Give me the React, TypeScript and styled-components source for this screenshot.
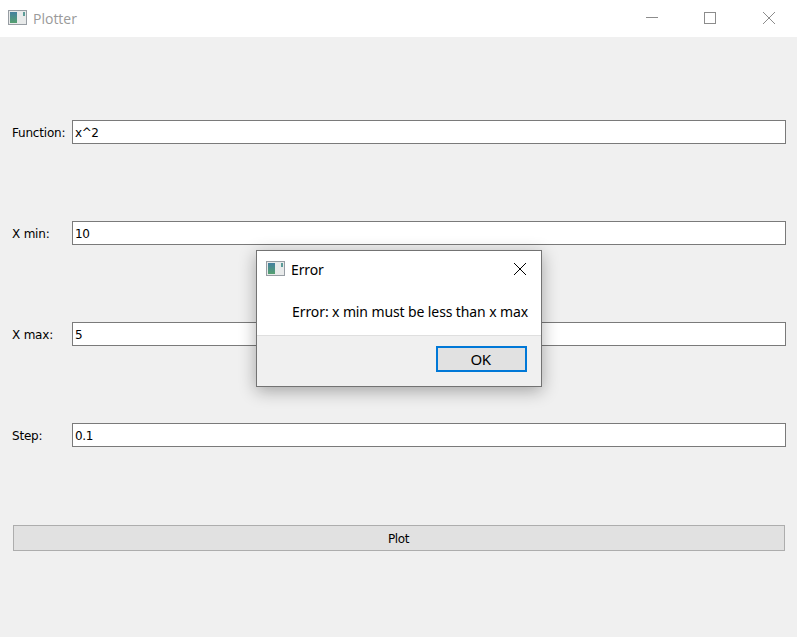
import React from 'react';
import styled, { createGlobalStyle } from 'styled-components';

const GlobalStyle = createGlobalStyle`
  html, body {
    margin: 0;
    padding: 0;
    background: #f0f0f0;
  }
`;

const Window = styled.div`
  position: relative;
  width: 797px;
  height: 637px;
  overflow: hidden;
  background: #f0f0f0;
  font-family: "Noto Sans", "Open Sans", sans-serif;
`;

const TitleBar = styled.div`
  height: 37px;
  background: #fff;
  display: flex;
  align-items: center;
  padding-left: 8px;
`;

const AppIconBox = styled.span<{ $lift: number }>`
  display: flex;
  margin-right: 6px;
  margin-bottom: ${(p) => p.$lift}px;
`;

const WindowTitle = styled.span`
  font-size: 14px;
  color: #9a9a9a;
  flex: 1;
  font-family: "Open Sans", "Noto Sans", sans-serif;
`;

const CaptionButton = styled.div`
  width: 58px;
  height: 36px;
  margin-bottom: 1px;
  flex-shrink: 0;
  display: flex;
  align-items: center;
  justify-content: center;

  &:last-child {
    padding-left: 1px;
    margin-right: -1px;
  }
`;

const Form = styled.div`
  display: flex;
  flex-direction: column;
  gap: 77px;
  padding: 83px 11px 0 12px;
`;

const Row = styled.div`
  display: flex;
  align-items: center;
  height: 24px;
`;

const Label = styled.label`
  width: 60px;
  padding-top: 1px;
  font-size: 12px;
  color: #000;
  font-family: "DejaVu Sans", sans-serif;
  letter-spacing: -0.2px;
`;

const Field = styled.div`
  flex: 1;
  height: 24px;
  box-sizing: border-box;
  border: 1px solid #7a7a7a;
  background: #fff;
  padding: 1px 0 0 2px;
  display: flex;
  align-items: center;
  font-size: 12px;
  color: #000;
  font-family: "DejaVu Sans", sans-serif;
  letter-spacing: -0.4px;
`;

const PlotButton = styled.div`
  margin: 1px 1px 0 1px;
  height: 26px;
  box-sizing: border-box;
  border: 1px solid #adadad;
  background: #e1e1e1;
  padding: 1px 1px 0 0;
  display: flex;
  align-items: center;
  justify-content: center;
  font-size: 12px;
  color: #000;
  font-family: "DejaVu Sans", sans-serif;
  letter-spacing: -0.4px;
`;

const Dialog = styled.div`
  position: absolute;
  left: 256px;
  top: 250px;
  width: 286px;
  height: 137px;
  box-sizing: border-box;
  border: 1px solid #737373;
  background: #fff;
  box-shadow: 0 4px 16px rgba(0, 0, 0, 0.32);
  display: flex;
  flex-direction: column;
  letter-spacing: -0.11px;
`;

const DialogHeader = styled.div`
  height: 36px;
  display: flex;
  align-items: center;
  padding-left: 9px;
`;

const DialogTitle = styled.span`
  flex: 1;
  font-size: 14px;
  color: #000;
`;

const DialogClose = styled.div`
  width: 42px;
  display: flex;
  justify-content: center;
`;

const DialogMessage = styled.div`
  flex: 1;
  display: flex;
  align-items: center;
  justify-content: flex-end;
  padding-right: 13px;
  font-size: 14px;
  color: #000;
  white-space: nowrap;
`;

const DialogFooter = styled.div`
  height: 51px;
  box-sizing: border-box;
  border-top: 1px solid #dfdfdf;
  background: #f0f0f0;
  display: flex;
  align-items: flex-start;
  justify-content: flex-end;
  padding: 10px 14px 0 0;
`;

const OkButton = styled.div`
  width: 91px;
  height: 26px;
  box-sizing: border-box;
  border: 2px solid #0078d7;
  background: #e1e1e1;
  padding-right: 2px;
  display: flex;
  align-items: center;
  justify-content: center;
  font-size: 15px;
  letter-spacing: -0.6px;
  color: #000;
`;

const AppIcon = ({ id }: { id: string }) => (
  <svg width="19" height="15" viewBox="0 0 19 15">
    <defs>
      <linearGradient id={id} x1="0" y1="0" x2="0" y2="1">
        <stop offset="0" stopColor="#44809f" />
        <stop offset="1" stopColor="#55a070" />
      </linearGradient>
    </defs>
    <rect x="0.5" y="0.5" width="18" height="14" fill="#e8eaea" stroke="#979da3" />
    <rect x="2" y="2" width="7" height="11" fill={`url(#${id})`} />
    <rect x="15" y="2" width="2" height="4" fill="#5c9c98" />
  </svg>
);

const fields = [
  { label: 'Function:', value: 'x^2' },
  { label: 'X min:', value: '10' },
  { label: 'X max:', value: '5' },
  { label: 'Step:', value: '0.1' },
];

const App = () => (
  <Window>
    <GlobalStyle />
    <TitleBar>
      <AppIconBox $lift={2}>
        <AppIcon id="pane-main" />
      </AppIconBox>
      <WindowTitle>Plotter</WindowTitle>
      <CaptionButton>
        <svg width="12" height="12" viewBox="0 0 12 12">
          <path d="M0 5.5H12" stroke="#8c8c8c" fill="none" />
        </svg>
      </CaptionButton>
      <CaptionButton>
        <svg width="12" height="12" viewBox="0 0 12 12">
          <rect x="0.5" y="0.5" width="11" height="11" stroke="#8c8c8c" fill="none" />
        </svg>
      </CaptionButton>
      <CaptionButton>
        <svg width="12" height="12" viewBox="0 0 12 12">
          <path d="M0 0L12 12M12 0L0 12" stroke="#8c8c8c" fill="none" />
        </svg>
      </CaptionButton>
    </TitleBar>
    <Form>
      {fields.map((f) => (
        <Row key={f.label}>
          <Label>{f.label}</Label>
          <Field>{f.value}</Field>
        </Row>
      ))}
      <PlotButton>Plot</PlotButton>
    </Form>
    <Dialog>
      <DialogHeader>
        <AppIconBox $lift={1}>
          <AppIcon id="pane-dialog" />
        </AppIconBox>
        <DialogTitle>Error</DialogTitle>
        <DialogClose>
          <svg width="12" height="12" viewBox="0 0 12 12">
            <path d="M0 0L12 12M12 0L0 12" stroke="#000" fill="none" />
          </svg>
        </DialogClose>
      </DialogHeader>
      <DialogMessage>Error: x min must be less than x max</DialogMessage>
      <DialogFooter>
        <OkButton>OK</OkButton>
      </DialogFooter>
    </Dialog>
  </Window>
);

export default App;
